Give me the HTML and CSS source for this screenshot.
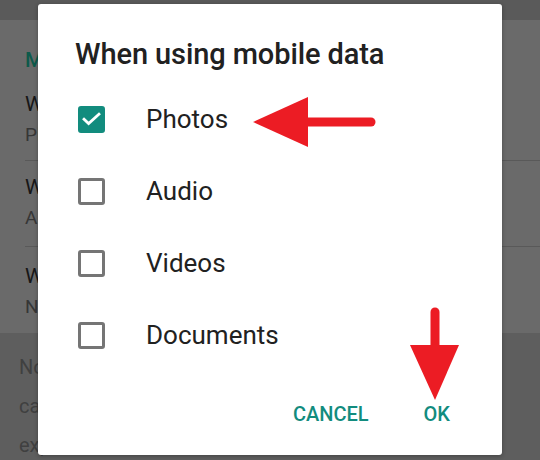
FILE: index.html
```html
<!DOCTYPE html>
<html lang="en">
<head>
<meta charset="utf-8">
<title>Storage and data</title>
<link rel="stylesheet" href="styles.css">
</head>
<body>
  <!-- settings screen, shown dimmed behind the dialog -->
  <div class="screen">
    <div class="appbar"></div>
    <div class="settings">
      <div class="section-head">Media auto-download</div>
      <div class="pref">
        <div class="pref-title">When using mobile data</div>
        <div class="pref-sub">Photos</div>
      </div>
      <div class="pref">
        <div class="pref-title">When connected on Wi-Fi</div>
        <div class="pref-sub">All media</div>
      </div>
      <div class="pref last">
        <div class="pref-title">When roaming</div>
        <div class="pref-sub">No media</div>
      </div>
    </div>
    <div class="footer-note">
      <p>Note: Voice messages are always</p>
      <p>cached for the best</p>
      <p>experience.</p>
    </div>
  </div>

  <div class="dialog" role="dialog" aria-labelledby="dlg-title">
    <h1 class="dialog-title" id="dlg-title">When using mobile data</h1>
    <ul class="options">
      <li class="option">
        <span class="box checked">
          <svg viewBox="0 0 24 24" width="24" height="24"><path d="M3.5 12.2l5.2 5L20.5 6.5" fill="none" stroke="#fff" stroke-width="3.2" stroke-linecap="square"/></svg>
        </span>
        <span class="label">Photos</span>
      </li>
      <li class="option"><span class="box"></span><span class="label">Audio</span></li>
      <li class="option"><span class="box"></span><span class="label">Videos</span></li>
      <li class="option"><span class="box"></span><span class="label">Documents</span></li>
    </ul>
    <div class="actions">
      <button class="btn" type="button">CANCEL</button>
      <button class="btn" type="button">OK</button>
    </div>
  </div>

  <!-- annotation arrows -->
  <svg class="arrow arrow-left" width="130" height="52" viewBox="0 0 130 52">
    <path d="M50 26H120" stroke="#ec1c24" stroke-width="9" stroke-linecap="round"/>
    <polygon points="2,26 57,1 57,51" fill="#ec1c24"/>
  </svg>
  <svg class="arrow arrow-down" width="52" height="96" viewBox="0 0 52 96">
    <path d="M26 6V45" stroke="#ec1c24" stroke-width="9" stroke-linecap="round"/>
    <polygon points="1,39 50,39 26,94" fill="#ec1c24"/>
  </svg>
</body>
</html>
```
FILE: styles.css
```css
* { box-sizing: border-box; }

html, body {
  margin: 0;
  padding: 0;
}

body {
  width: 540px;
  height: 460px;
  overflow: hidden;
  position: relative;
  font-family: Roboto, "Noto Sans", "Liberation Sans", sans-serif;
  background: #5d5d5d;
}

/* settings screen (colours already dimmed) */
.screen {
  display: flex;
  flex-direction: column;
  height: 460px;
}

.appbar {
  flex: none;
  height: 20px;
  background: #5a5a5a;
}

.settings {
  flex: none;
  background: #6a6a6a;
  padding-left: 25px;
}

.section-head {
  color: #0d5a4b;
  font-weight: 500;
  font-size: 21px;
  line-height: 20px;
  height: 60px;
  padding-top: 30px;
  white-space: nowrap;
}

.pref {
  border-bottom: 1px solid #595959;
  height: 86px;
  padding-top: 13px;
}

.settings .section-head + .pref {
  height: 81px;
  padding-top: 11px;
}

.pref.last {
  border-bottom: none;
  height: 86px;
  padding-top: 16px;
}

.pref-title {
  font-size: 21px;
  color: #161616;
  line-height: 26px;
  white-space: nowrap;
}

.pref-sub {
  margin-top: 2px;
  font-size: 19px;
  color: #363636;
  line-height: 32px;
}

.footer-note {
  flex: 1;
  min-height: 0;
  overflow: hidden;
  background: #5e5e5e;
  padding: 15px 0 0 19px;
  color: #404040;
  font-size: 20px;
}

.footer-note p {
  margin: 0;
  line-height: 39px;
  white-space: nowrap;
}

/* dialog */
.dialog {
  position: absolute;
  left: 38px;
  top: 4px;
  width: 464px;
  height: 451px;
  background: #fff;
  border-radius: 3px;
  padding: 33px 0 0 37px;
  display: flex;
  flex-direction: column;
  box-shadow: 0 1px 4px rgba(0, 0, 0, 0.3);
}

.dialog-title {
  margin: 0;
  font-size: 29px;
  font-weight: 500;
  line-height: 34px;
  color: #212121;
  letter-spacing: -0.1px;
}

.options {
  list-style: none;
  margin: 12px 0 0;
  padding: 0;
}

.option {
  display: flex;
  align-items: center;
  height: 72px;
}

.box {
  width: 27px;
  height: 27px;
  margin-left: 3px;
  border: 3px solid #757575;
  border-radius: 3px;
  display: flex;
  align-items: center;
  justify-content: center;
  flex: none;
}

.box.checked {
  background: #128c7e;
  border-color: #128c7e;
}

.label {
  margin-left: 41px;
  font-size: 26px;
  color: #212121;
}

.actions {
  margin-top: auto;
  display: flex;
  justify-content: flex-end;
  gap: 55px;
  padding: 0 52px 29px 0;
}

.btn {
  border: none;
  background: none;
  padding: 0;
  font-family: inherit;
  font-size: 20px;
  font-weight: 500;
  line-height: normal;
  color: #128c7e;
}

.arrow {
  position: absolute;
}

.arrow-left {
  left: 251px;
  top: 96px;
}

.arrow-down {
  left: 409px;
  top: 306px;
}
```
